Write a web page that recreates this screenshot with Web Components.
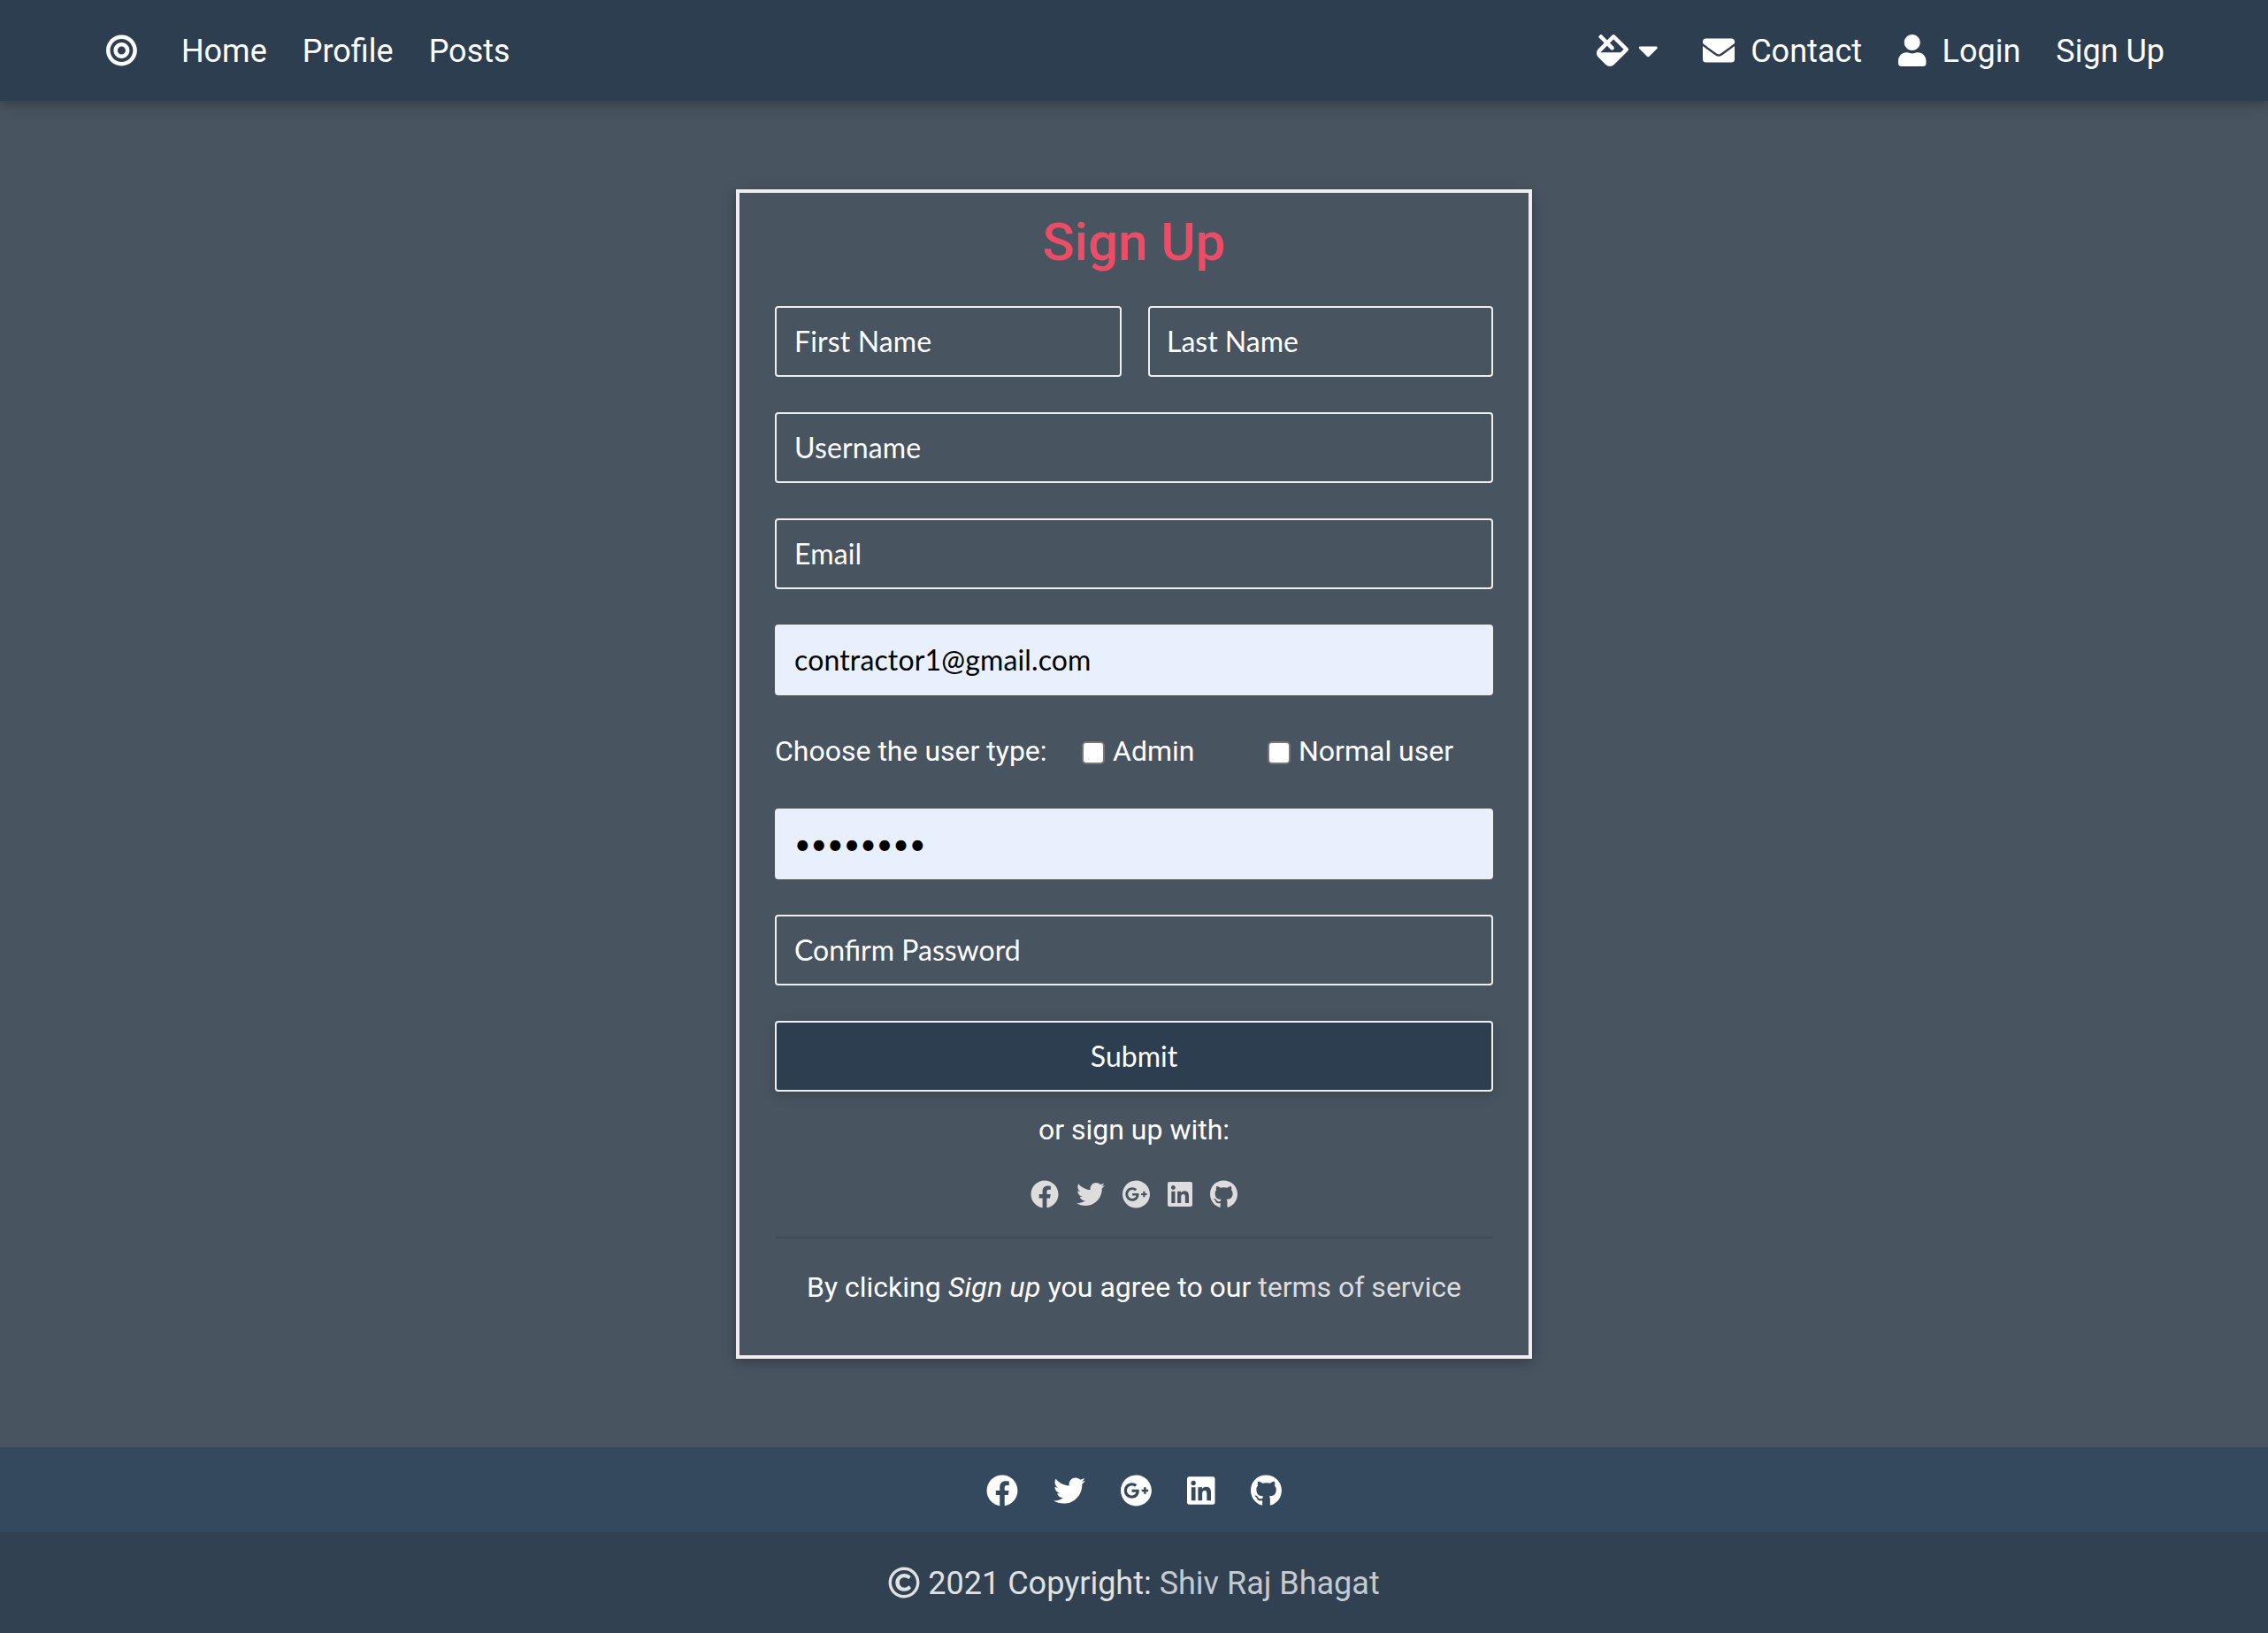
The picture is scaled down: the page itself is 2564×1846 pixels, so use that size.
<!DOCTYPE html>
<html lang="en">
<head>
<meta charset="utf-8">
<title>Sign Up</title>
<style>
  html, body { margin: 0; height: 100%; }
  body { background: #485460; font-family: Roboto, "Liberation Sans", sans-serif; font-size: 32px; line-height: 48px; color: #fff; }
</style>
</head>
<body>
<signup-app></signup-app>
<script>
const ICONS = {
  bullseye: [496, 'M248 8C111.03 8 0 119.03 0 256s111.03 248 248 248 248-111.03 248-248S384.97 8 248 8zm0 432c-101.69 0-184-82.29-184-184 0-101.69 82.29-184 184-184 101.69 0 184 82.29 184 184 0 101.69-82.29 184-184 184zm0-312c-70.69 0-128 57.31-128 128s57.31 128 128 128 128-57.31 128-128-57.31-128-128-128zm0 192c-35.29 0-64-28.71-64-64s28.71-64 64-64 64 28.71 64 64-28.71 64-64 64z'],
  fill: [512, 'M502.63 217.06L294.94 9.37C288.69 3.12 280.5 0 272.31 0s-16.38 3.12-22.62 9.37l-81.58 81.58L81.93 4.77c-6.24-6.25-16.38-6.25-22.62 0L36.69 27.38c-6.24 6.25-6.24 16.38 0 22.63l86.19 86.18-94.76 94.76c-37.49 37.49-37.49 98.26 0 135.75l117.19 117.19c18.75 18.74 43.31 28.12 67.87 28.12 24.57 0 49.13-9.37 67.88-28.12l221.57-221.57c12.49-12.5 12.49-32.76 0-45.26zm-116.22 70.97H65.93c1.36-3.84 3.57-7.98 7.43-11.83l13.15-13.15 81.61-81.61 58.61 58.6c12.49 12.49 32.75 12.49 45.24 0s12.49-32.75 0-45.24l-58.61-58.6 58.95-58.95 162.44 162.44-48.34 48.34z'],
  caret: [320, 'M31.3 192h257.3c17.8 0 26.7 21.5 14.1 34.1L174.1 354.7c-7.8 7.8-20.5 7.8-28.3 0L17.2 226.1C4.6 213.5 13.5 192 31.3 192z'],
  envelope: [512, 'M502.3 190.8c3.9-3.1 9.7-.2 9.7 4.7V400c0 26.5-21.5 48-48 48H48c-26.5 0-48-21.5-48-48V195.6c0-5 5.7-7.8 9.7-4.7 22.4 17.4 52.1 39.5 154.1 113.6 21.1 15.4 56.7 47.8 92.2 47.6 35.7.3 72-32.8 92.3-47.6 102-74.1 131.6-96.3 154-113.7zM256 320c23.2.4 56.6-29.2 73.4-41.4 132.7-96.3 142.8-104.7 173.4-128.7 5.8-4.5 9.2-11.5 9.2-18.9v-19c0-26.5-21.5-48-48-48H48c-26.5 0-48 21.5-48 48v19c0 7.4 3.4 14.3 9.2 18.9 30.6 23.9 40.7 32.4 173.4 128.7 16.8 12.2 50.2 41.8 73.4 41.4z'],
  user: [448, 'M224 256c70.7 0 128-57.3 128-128S294.7 0 224 0 96 57.3 96 128s57.3 128 128 128zm89.6 32h-16.7c-22.2 10.2-46.9 16-72.9 16s-50.6-5.8-72.9-16h-16.7C60.2 288 0 348.2 0 422.4V464c0 26.5 21.5 48 48 48h352c26.5 0 48-21.5 48-48v-41.6c0-74.2-60.2-134.4-134.4-134.4z'],
  facebook: [512, 'M504 256C504 119 393 8 256 8S8 119 8 256c0 123.78 90.69 226.38 209.25 245V327.69h-63V256h63v-54.64c0-62.15 37-96.48 93.67-96.48 27.14 0 55.52 4.84 55.52 4.84v61h-31.28c-30.8 0-40.41 19.12-40.41 38.73V256h68.78l-11 71.69h-57.78V501C413.31 482.38 504 379.78 504 256z'],
  twitter: [512, 'M459.37 151.716c.325 4.548.325 9.097.325 13.645 0 138.72-105.583 298.558-298.558 298.558-59.452 0-114.68-17.219-161.137-47.106 8.447.974 16.568 1.299 25.34 1.299 49.055 0 94.213-16.568 130.274-44.832-46.132-.975-84.792-31.188-98.112-72.772 6.498.974 12.995 1.624 19.818 1.624 9.421 0 18.843-1.3 27.614-3.573-48.081-9.747-84.143-51.98-84.143-102.985v-1.299c13.969 7.797 30.214 12.67 47.431 13.319-28.264-18.843-46.781-51.005-46.781-87.391 0-19.492 5.197-37.36 14.294-52.954 51.655 63.675 129.3 105.258 216.365 109.807-1.624-7.797-2.599-15.918-2.599-24.04 0-57.828 46.782-104.934 104.934-104.934 30.213 0 57.502 12.67 76.67 33.137 23.715-4.548 46.456-13.32 66.599-25.34-7.798 24.366-24.366 44.833-46.132 57.827 21.117-2.273 41.584-8.122 60.426-16.243-14.292 20.791-32.161 39.308-52.628 54.253z'],
  google: [496, 'M248 8C111.1 8 0 119.1 0 256s111.1 248 248 248 248-111.1 248-248S384.9 8 248 8zm-70.7 372c-68.8 0-124-55.5-124-124s55.2-124 124-124c31.3 0 60.1 11 83 32.3l-33.6 32.6c-13.2-12.9-31.3-19.1-49.4-19.1-42.9 0-77.2 35.5-77.2 78.1s34.2 78.1 77.2 78.1c32.6 0 64.9-19.1 70.1-53.3h-70.1v-42.6h116.9c1.3 6.8 1.9 13.6 1.9 20.7 0 70.8-47.5 121.2-118.8 121.2zm230.2-106.2v35.5H372v-35.5h-35.5v-35.5H372v-35.5h35.5v35.5h35.2v35.5h-35.2z'],
  linkedin: [448, 'M416 32H31.9C14.3 32 0 46.5 0 64.3v383.4C0 465.5 14.3 480 31.9 480H416c17.6 0 32-14.5 32-32.3V64.3c0-17.8-14.4-32.3-32-32.3zM135.4 416H69V202.2h66.5V416zm-33.2-243c-21.3 0-38.5-17.3-38.5-38.5S80.9 96 102.2 96c21.2 0 38.5 17.3 38.5 38.5 0 21.3-17.2 38.5-38.5 38.5zm282.1 243h-66.4V312c0-24.8-.5-56.7-34.5-56.7-34.6 0-39.9 27-39.9 54.9V416h-66.4V202.2h63.7v29.2h.9c8.9-16.8 30.6-34.5 62.9-34.5 67.2 0 79.7 44.3 79.7 101.9V416z'],
  github: [496, 'M244.8 8C106.1 8 0 113.3 0 252c0 110.9 69.8 205.8 169.5 239.2 12.8 2.3 17.3-5.6 17.3-12.1 0-6.2-.3-40.4-.3-61.4 0 0-70 15-84.7-29.8 0 0-11.4-29.1-27.8-36.6 0 0-22.9-15.7 1.6-15.4 0 0 24.9 2 38.6 25.8 21.9 38.6 58.6 27.5 72.9 20.9 2.3-16 8.8-27.1 16-33.7-55.9-6.2-112.3-14.3-112.3-110.5 0-27.5 7.6-41.3 23.6-58.9-2.6-6.5-11.1-33.3 2.6-67.9 20.9-6.5 69 27 69 27 20-5.6 41.5-8.5 62.8-8.5s42.8 2.9 62.8 8.5c0 0 48.1-33.6 69-27 13.7 34.7 5.2 61.4 2.6 67.9 16 17.7 25.8 31.5 25.8 58.9 0 96.5-58.9 104.2-114.8 110.5 9.2 7.9 17 22.9 17 46.4 0 33.7-.3 75.4-.3 83.6 0 6.5 4.6 14.4 17.3 12.1C428.2 457.8 496 362.9 496 252 496 113.3 383.5 8 244.8 8z'],
  copyright: [512, 'M256 8C119.033 8 8 119.033 8 256s111.033 248 248 248 248-111.033 248-248S392.967 8 256 8zm0 448c-110.532 0-200-89.451-200-200 0-110.531 89.451-200 200-200 110.532 0 200 89.451 200 200 0 110.532-89.451 200-200 200zm107.351-101.064c-9.614 9.712-45.53 41.396-104.065 41.396-82.43 0-140.484-61.425-140.484-141.567 0-79.152 60.275-139.401 139.762-139.401 55.531 0 88.738 26.62 97.593 34.779a11.965 11.965 0 0 1 1.936 15.322l-18.155 28.113c-3.841 5.95-11.966 7.282-17.499 2.921-8.595-6.776-31.814-22.538-61.708-22.538-48.303 0-77.916 35.33-77.916 80.082 0 41.589 26.888 83.692 78.277 83.692 32.657 0 56.843-19.039 65.726-27.225 5.27-4.857 13.596-4.039 17.82 1.738l19.865 27.17a11.947 11.947 0 0 1-1.152 15.518z']
};

function define(name, html) {
  const t = document.createElement('template');
  t.innerHTML = html;
  customElements.define(name, class extends HTMLElement {
    constructor() {
      super();
      this.attachShadow({ mode: 'open' }).append(t.content.cloneNode(true));
    }
  });
}

/* Glyph one em tall; its width follows the icon's own proportions. */
customElements.define('fa-icon', class extends HTMLElement {
  connectedCallback() {
    if (this.shadowRoot) return;
    const [w, d] = ICONS[this.getAttribute('name')];
    this.attachShadow({ mode: 'open' }).innerHTML =
      `<style>:host{display:block;flex:none;height:1em;width:${w / 512}em}svg{display:block;width:100%;height:100%;fill:currentColor}</style><svg viewBox="0 0 ${w} 512" aria-hidden="true"><path d="${d}"/></svg>`;
  }
});

define('nav-item', `
  <style>
    :host { display: flex; align-items: center; gap: 18px; white-space: nowrap; }
    ::slotted(span) { padding-top: 2px; }
  </style>
  <slot></slot>`);

define('nav-bar', `
  <style>
    :host { display: flex; align-items: center; justify-content: space-between; box-sizing: border-box; height: 114px; flex: none;
      padding: 0 117px 0 120px; background: #2c3e50; font-size: 36px; line-height: 54px;
      position: relative; box-shadow: 0 4px 10px rgba(0,0,0,.16), 0 4px 20px rgba(0,0,0,.12); }
    .group { display: flex; align-items: center; gap: 40px; }
    .brand { margin: 0 10px 1px 0; }
    .theme { gap: 11px; margin-right: 11px; }
    .contact { margin-right: 1px; }
    fa-icon { margin-bottom: 1px; }
  </style>
  <div class="group">
    <fa-icon class="brand" name="bullseye"></fa-icon>
    <nav-item><span>Home</span></nav-item><nav-item><span>Profile</span></nav-item><nav-item><span>Posts</span></nav-item>
  </div>
  <div class="group">
    <nav-item class="theme"><fa-icon name="fill"></fa-icon><fa-icon name="caret"></fa-icon></nav-item>
    <nav-item class="contact"><fa-icon name="envelope"></fa-icon><span>Contact</span></nav-item>
    <nav-item><fa-icon name="user"></fa-icon><span>Login</span></nav-item>
    <nav-item><span>Sign Up</span></nav-item>
  </div>`);

define('text-field', `
  <style>
    :host { display: flex; align-items: center; box-sizing: border-box; height: 80px; padding: 0 20px;
      border: 2px solid #eee; border-radius: 4px; font-family: Lato, sans-serif; color: #fff; }
    :host([filled]) { background: #e8f0fe; color: #000; }
  </style>
  <slot></slot>`);

define('check-option', `
  <style>
    :host { display: flex; align-items: center; gap: 9px; white-space: nowrap; }
    i { box-sizing: border-box; width: 26px; height: 26px; margin-top: 4px; border: 2px solid #767676; border-radius: 5px; background: #fff; }
  </style>
  <i></i><span><slot></slot></span>`);

define('submit-button', `
  <style>
    :host { display: flex; align-items: center; justify-content: center; box-sizing: border-box; height: 80px;
      border: 2px solid #eee; border-radius: 4px; background: #2c3e50; font-family: Lato, sans-serif;
      box-shadow: 0 4px 10px rgba(0,0,0,.12), 0 4px 20px rgba(0,0,0,.07); }
  </style>
  <slot></slot>`);

define('social-links', `
  <style>:host { display: flex; align-items: center; justify-content: center; }</style>
  <fa-icon name="facebook"></fa-icon><fa-icon name="twitter"></fa-icon><fa-icon name="google"></fa-icon><fa-icon name="linkedin"></fa-icon><fa-icon name="github"></fa-icon>`);

define('signup-card', `
  <style>
    :host { display: block; box-sizing: border-box; width: 900px; height: 1322px; padding: 20px 40px 0; border: 4px solid #eee;
      box-shadow: 0 4px 10px rgba(0,0,0,.16), 0 4px 20px rgba(0,0,0,.12); }
    h1 { margin: 0 0 36px; font-size: 60px; line-height: 72px; font-weight: 500; color: #ed4c67; text-align: center; }
    form { display: flex; flex-direction: column; gap: 40px; }
    .names { display: grid; grid-template-columns: 392px 390px; gap: 30px; }
    .names text-field + text-field { padding-left: 19px; letter-spacing: 0; }
    .loose { letter-spacing: .15px; }
    .types { display: flex; height: 48px; margin: -1px 0 1px; }
    .types > span { width: 347px; white-space: nowrap; }
    .types > check-option:first-of-type { width: 210px; }
    p { margin: 19px 0 0; text-align: center; }
    social-links { gap: 20px; height: 48px; margin-top: 25px; color: #ddd; }
    hr { margin: 24px 0 31px; height: 2px; border: 0; background: rgba(0,0,0,.1); }
    hr + p { margin: 0; white-space: nowrap; }
    em { letter-spacing: .3px; }
    a { color: #ddd; }
  </style>
  <h1>Sign Up</h1>
  <form>
    <div class="names"><text-field class="loose">First Name</text-field><text-field>Last Name</text-field></div>
    <text-field class="loose">Username</text-field>
    <text-field class="loose">Email</text-field>
    <text-field class="loose" filled>contractor1@gmail.com</text-field>
    <div class="types"><span>Choose the user type:</span><check-option>Admin</check-option><check-option>Normal user</check-option></div>
    <text-field filled>••••••••</text-field>
    <text-field>Confirm Password</text-field>
    <submit-button>Submit</submit-button>
  </form>
  <p>or sign up with:</p>
  <social-links></social-links>
  <hr>
  <p>By clicking <em>Sign up</em> you agree to our <a>terms of service</a></p>`);

define('page-footer', `
  <style>
    :host { display: block; flex: none; font-size: 36px; line-height: 54px; }
    social-links { box-sizing: border-box; gap: 40px; height: 96px; padding-top: 1px; background: #34495e; }
    .legal { display: flex; align-items: center; justify-content: center; height: 114px; background: #314151; color: #dfe1e4; white-space: nowrap; }
    .legal span { padding-top: 2px; }
    fa-icon { margin: 0 9px 0 0; }
    social-links + .legal fa-icon { margin-right: 9px; }
    a { color: #c5cad0; }
  </style>
  <social-links></social-links>
  <div class="legal"><fa-icon name="copyright"></fa-icon><span>2021 Copyright: <a>Shiv Raj Bhagat</a></span></div>`);

define('signup-app', `
  <style>
    :host { display: flex; flex-direction: column; height: 100%; overflow: hidden; }
    main { flex: 1; display: flex; justify-content: center; align-items: flex-start; padding-top: 100px; }
  </style>
  <nav-bar></nav-bar>
  <main><signup-card></signup-card></main>
  <page-footer></page-footer>`);
</script>
</body>
</html>
